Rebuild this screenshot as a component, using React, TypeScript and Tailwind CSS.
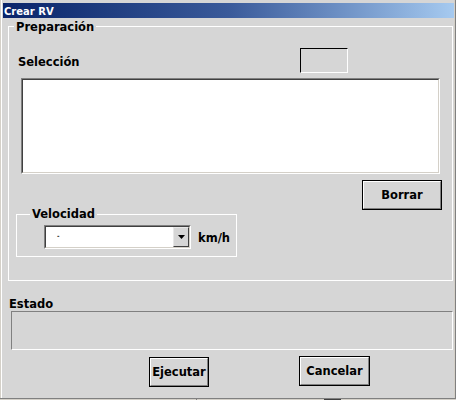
import React from "react";

function Btn({ label, className }: { label: string; className: string }) {
  return (
    <div className={className}>
      <div className="h-full w-full border border-black">
        <div className="h-full w-full border-t border-l border-t-white border-l-white border-r border-b border-r-[#808080] border-b-[#808080] flex items-center justify-center font-bold text-[11.5px] leading-[13px] text-black">
          {label}
        </div>
      </div>
    </div>
  );
}

export default function App() {
  return (
    <div className="w-[456px] h-[400px] bg-[#d6d6d6] flex flex-col overflow-hidden font-['DejaVu_Sans',Verdana,sans-serif] text-black">
      <div className="flex-1 flex flex-col border-l border-l-[#d4d0c8] border-r border-r-[#808080]">
        <div className="flex-1 flex flex-col border-l border-l-white border-r border-r-[#d4d0c8] pl-[1px]">
          {/* Title bar */}
          <div className="mt-[3px] h-[15px] bg-gradient-to-r from-[#0a246a] via-[#3a5a9a] to-[#a6caf0] pl-[1px] text-white font-bold text-[10px] leading-[17px] overflow-hidden">
            Crear RV
          </div>

          {/* Preparación group */}
          <div className="relative mt-[8px] ml-[5px] w-[445px] h-[255px] border border-white flex flex-col">
            <span className="absolute left-[5px] top-[-6px] px-[2px] bg-[#d6d6d6] font-bold text-[11.5px] leading-[13px]">
              Preparación
            </span>
            <div className="mt-[21px] h-[25px] flex items-start">
              <span className="ml-[9px] mt-[8px] font-bold text-[11.5px] leading-[13px]">Selección</span>
              <div className="ml-auto mr-[104px] w-[48px] h-[25px] border-t border-l border-t-black border-l-black border-b border-r border-b-white border-r-white" />
            </div>
            {/* List box */}
            <div className="mt-[5px] ml-[12px] w-[419px] h-[96px] border-t border-l border-t-[#808080] border-l-[#808080] border-b border-r border-b-white border-r-white">
              <div className="w-full h-full bg-white border-t border-l border-t-[#404040] border-l-[#404040] border-b border-r border-b-[#d4d0c8] border-r-[#d4d0c8]" />
            </div>
            <Btn label="Borrar" className="mt-[6px] ml-[353px] w-[80px] h-[30px]" />
            {/* Velocidad group */}
            <div className="relative mt-[4px] ml-[7px] w-[221px] h-[43px] border border-white">
              <span className="absolute left-[13px] top-[-7px] px-[2px] bg-[#d6d6d6] font-bold text-[11.5px] leading-[13px]">
                Velocidad
              </span>
              <div className="mt-[10px] ml-[27px] flex items-start">
                <div className="w-[147px] h-[24px] border-t border-l border-t-[#808080] border-l-[#808080] border-b border-r border-b-white border-r-white">
                  <div className="w-full h-full bg-white border-t border-l border-t-[#404040] border-l-[#404040] border-b border-r border-b-[#d4d0c8] border-r-[#d4d0c8] flex items-start">
                    <span className="ml-[11px] mt-[6px] text-[6px] leading-[6px] font-bold text-black">-</span>
                    <div className="ml-auto w-[16px] h-[20px] bg-[#d6d6d6] border-t border-l border-t-[#e8e8e8] border-l-[#e8e8e8] border-b border-r border-b-[#404040] border-r-[#404040] flex items-center justify-center">
                      <svg width="7" height="4" viewBox="0 0 7 4">
                        <polygon points="0,0 7,0 3.5,4" fill="#000" />
                      </svg>
                    </div>
                  </div>
                </div>
                <span className="ml-[7px] mt-[7px] font-bold text-[11.5px] leading-[13px]">km/h</span>
              </div>
            </div>
          </div>

          {/* Estado */}
          <span className="mt-[17px] ml-[6px] h-[13px] font-bold text-[11.5px] leading-[13px]">Estado</span>
          <div className="ml-[8px] w-[442px] h-[39px] border-t border-l border-t-[#808080] border-l-[#808080] border-b border-r border-b-white border-r-white" />

          {/* Buttons */}
          <div className="mt-[6px] flex items-start">
            <Btn label="Ejecutar" className="mt-[1px] ml-[146px] w-[60px] h-[30px]" />
            <Btn label="Cancelar" className="ml-[90px] w-[71px] h-[30px]" />
          </div>
          <div className="flex-1" />
        </div>
      </div>
      <div className="h-[1px] bg-[#808080]" />
      <div className="h-[1px] bg-[#d4d0c8] flex">
        <div className="ml-[196px] w-[1px] bg-[#808080]" />
        <div className="ml-[127px] w-[17px] bg-[#404040]" />
      </div>
    </div>
  );
}
